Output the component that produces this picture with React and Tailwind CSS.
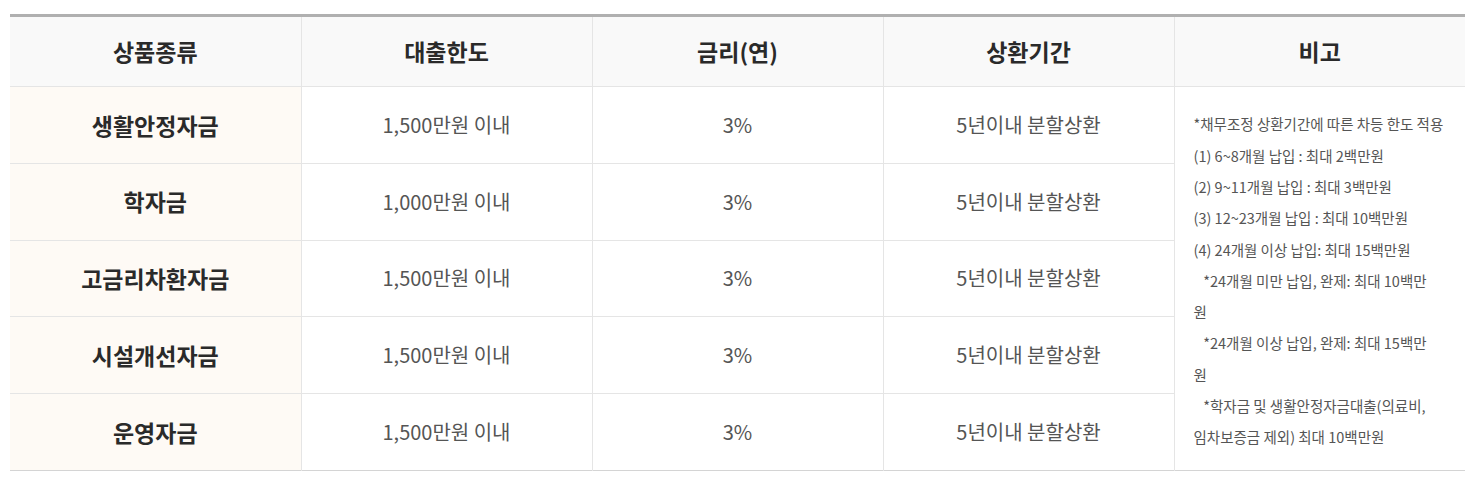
const rows = [
  { name: '생활안정자금', limit: '1,500만원 이내' },
  { name: '학자금', limit: '1,000만원 이내' },
  { name: '고금리차환자금', limit: '1,500만원 이내' },
  { name: '시설개선자금', limit: '1,500만원 이내' },
  { name: '운영자금', limit: '1,500만원 이내' },
];

const notes = [
  '*채무조정 상환기간에 따른 차등 한도 적용',
  '(1) 6~8개월 납입 : 최대 2백만원',
  '(2) 9~11개월 납입 : 최대 3백만원',
  '(3) 12~23개월 납입 : 최대 10백만원',
  '(4) 24개월 이상 납입: 최대 15백만원',
  '\u00a0\u00a0\u00a0*24개월 미만 납입, 완제: 최대 10백만',
  '원',
  '\u00a0\u00a0\u00a0*24개월 이상 납입, 완제: 최대 15백만',
  '원',
  '\u00a0\u00a0\u00a0*학자금 및 생활안정자금대출(의료비,',
  '임차보증금 제외) 최대 10백만원',
];

const heads = ['상품종류', '대출한도', '금리(연)', '상환기간', '비고'];

export default function App() {
  return (
    <div className="bg-white min-h-screen pt-[14px] pl-[10px] font-['Noto_Sans_CJK_KR',sans-serif]">
      <table className="w-[1455px] table-fixed border-collapse border-t-[3px] border-t-[#b0b0b0] border-b border-b-[#d4d4d4]">
        <thead>
          <tr className="h-[71px] bg-[#f9f9f9]">
            {heads.map((h, i) => (
              <th
                key={h}
                className={`w-[291px] text-center text-[23px] font-bold text-[#2a2a2a] border-b border-[#e5e5e5] ${i > 0 ? 'border-l' : ''}`}
              >
                {h}
              </th>
            ))}
          </tr>
        </thead>
        <tbody>
          {rows.map((r, i) => (
            <tr key={r.name} className={`h-[76.8px] ${i > 0 ? 'border-t border-[#e5e5e5]' : ''}`}>
              <td className="bg-[#fefaf5] text-center text-[23px] font-bold text-[#2a2a2a]">{r.name}</td>
              <td className="border-l border-[#e5e5e5] text-center text-[20px] text-[#555]">{r.limit}</td>
              <td className="border-l border-[#e5e5e5] text-center text-[20px] text-[#555]">3%</td>
              <td className="border-l border-[#e5e5e5] text-center text-[20px] text-[#555]">5년이내 분할상환</td>
              {i === 0 && (
                <td rowSpan={5} className="border-l border-[#e5e5e5] pl-[19px] pr-[10px] pt-[4px] align-middle text-[14.5px] leading-[31.3px] text-[#555]">
                  {notes.map((n, k) => (
                    <div key={k} className="whitespace-nowrap">{n}</div>
                  ))}
                </td>
              )}
            </tr>
          ))}
        </tbody>
      </table>
    </div>
  );
}
